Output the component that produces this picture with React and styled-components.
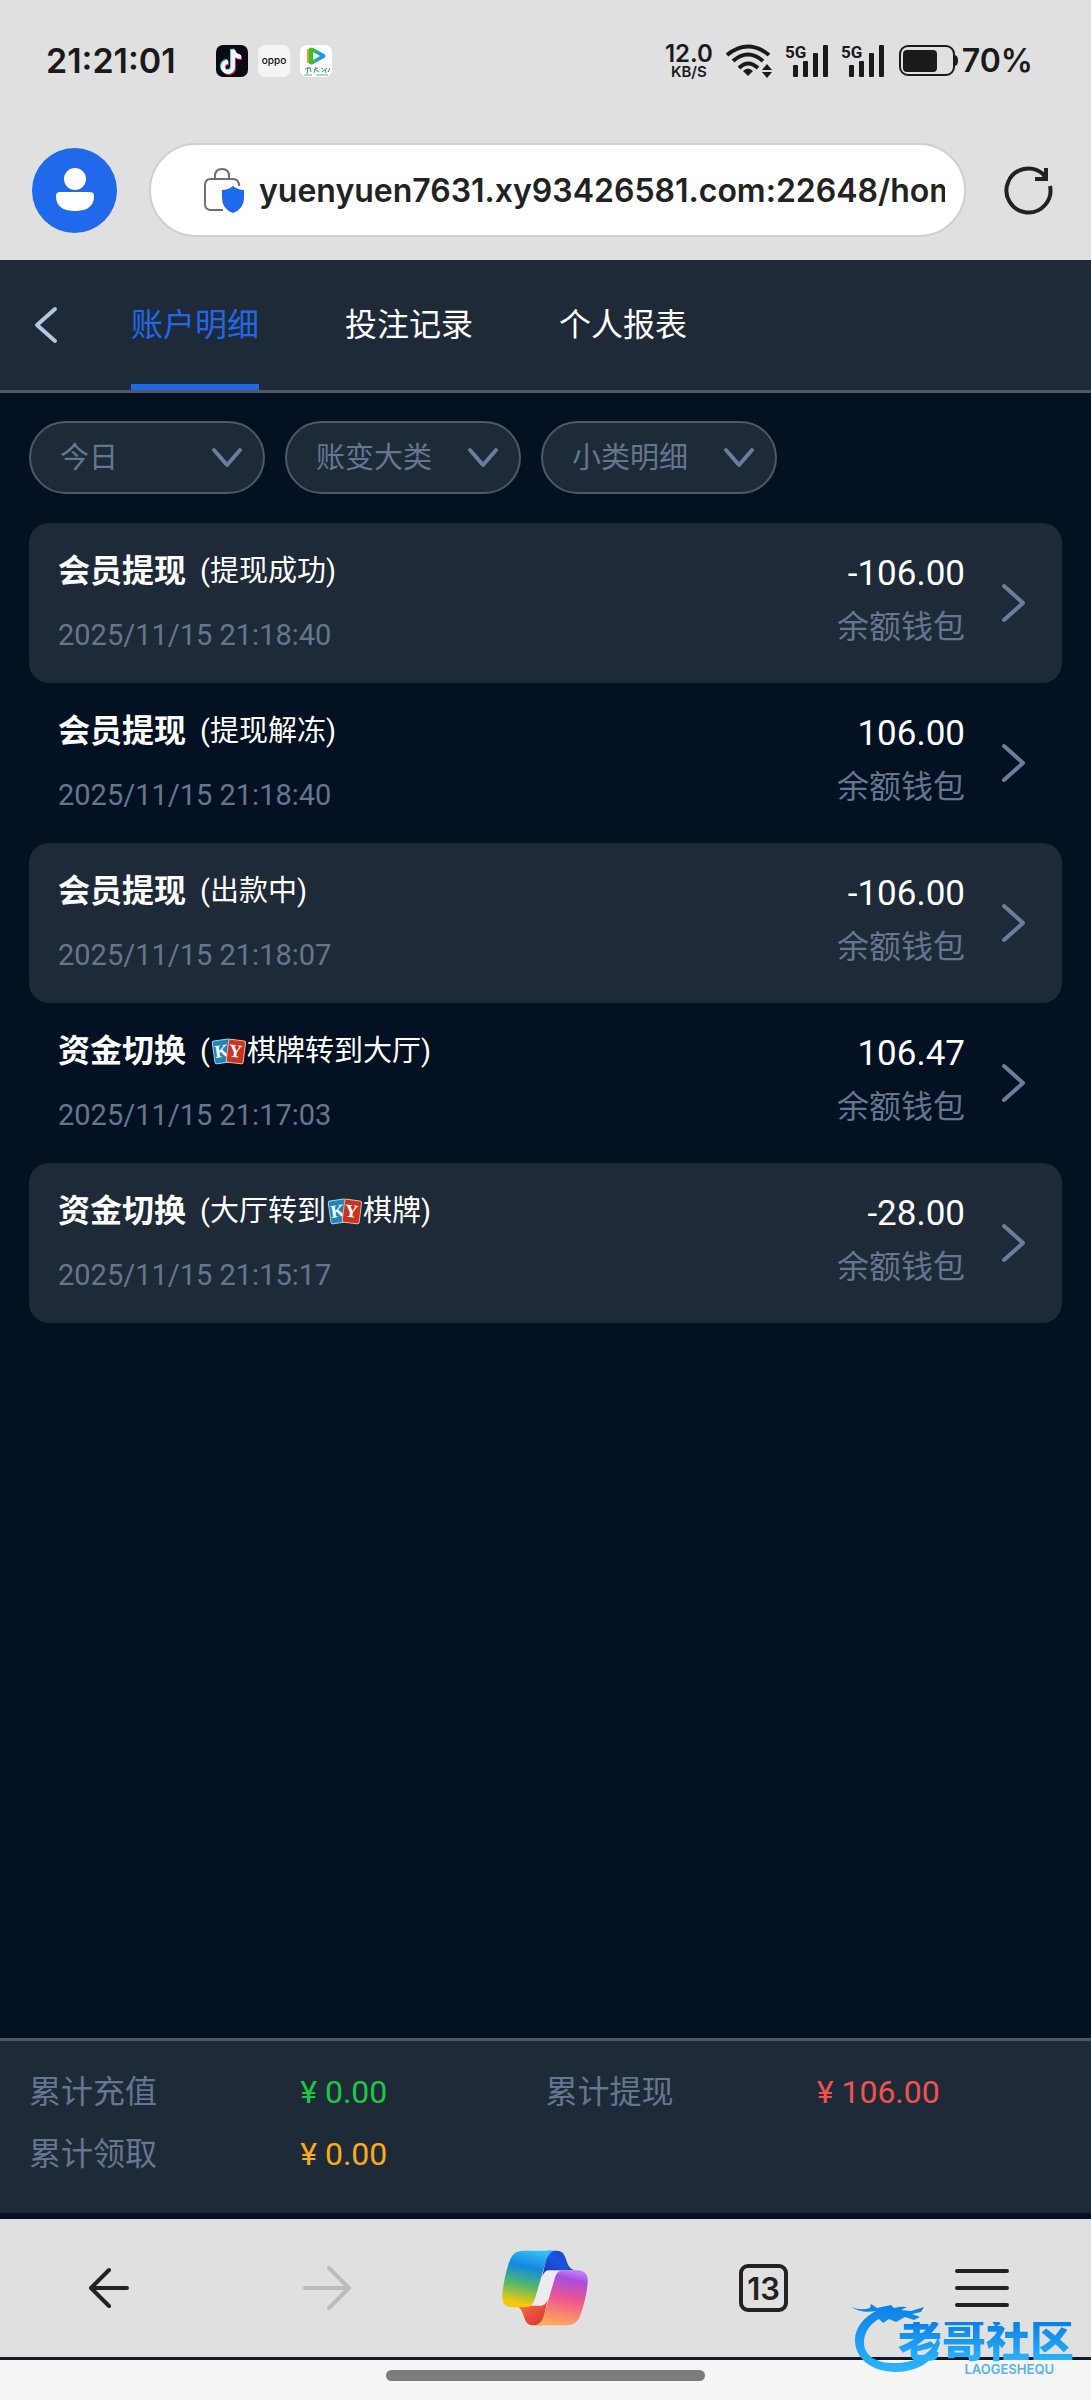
import React, { useState } from "react";
import styled, { createGlobalStyle } from "styled-components";

const GlobalStyle = createGlobalStyle`
  * {
    box-sizing: border-box;
  }
  body {
    margin: 0;
    background-color: #041122;
    font-family: Roboto, "Noto Sans CJK SC", sans-serif;
  }
  button, input, select {
    font-family: inherit;
    border: none;
    padding: 0;
    margin: 0;
    background: none;
    outline: none;
  }
  svg {
    display: block;
    flex-shrink: 0;
    overflow: visible;
  }
`;
const Page = styled.div`
  min-height: 100vh;
  display: flex;
  flex-direction: column;
  position: relative;
`;

/* phone status bar */
const StatusBar = styled.header`
  height: 122px;
  padding: 0 58px 0 46px;
  display: flex;
  align-items: center;
  justify-content: space-between;
  background-color: #e0e0e0;
  color: #1a1a1a;
  font-family: Inter, sans-serif;
`;
const StatusGroup = styled.div`
  display: flex;
  align-items: center;
  gap: ${(props) => props.gap};
`;
const Clock = styled.span`
  width: 160px;
  font-size: 34px;
  line-height: 40px;
  font-weight: 600;
`;
const Speed = styled.div`
  display: flex;
  flex-direction: column;
  align-items: center;
  font-size: 24px;
  line-height: 21px;
  font-weight: 600;
`;
const SpeedUnit = styled.span`
  font-size: 15px;
  line-height: 16px;
`;
const BatteryGroup = styled.div`
  display: flex;
  align-items: center;
  gap: 4px;
  margin-left: 2px;
  font-size: 32px;
  line-height: 40px;
  font-weight: 600;
`;

/* browser address bar */
const AddressBar = styled.div`
  height: 138px;
  padding: 0 38px 2px 32px;
  display: flex;
  align-items: center;
  background-color: #e0e0e0;
`;
const Avatar = styled.button`
  width: 85px;
  height: 85px;
  border-radius: 50%;
  background-color: #2169eb;
  display: flex;
  align-items: center;
  justify-content: center;
`;
const UrlBox = styled.label`
  flex: 1;
  min-width: 0;
  height: 94px;
  margin: 0 38px 0 32px;
  padding: 0 19px 0 52px;
  display: flex;
  align-items: center;
  gap: 14px;
  background-color: #ffffff;
  border: 2px solid #d0d0d0;
  border-radius: 47px;
`;
const UrlInput = styled.input`
  flex: 1;
  min-width: 0;
  height: 48px;
  color: #222222;
  font-family: Inter, sans-serif;
  font-size: 32px;
  font-weight: 600;
`;
const IconButton = styled.button`
  display: flex;
  align-items: center;
  justify-content: center;
`;

/* page tabs */
const Nav = styled.nav`
  height: 133px;
  padding: 0 30px;
  display: flex;
  background-color: #1f2a39;
  border-bottom: 3px solid #505765;
`;
const BackButton = styled(IconButton)`
  width: 32px;
  margin-right: 69px;
`;
const Tab = styled.button`
  margin-right: 86px;
  font-size: 32px;
  color: ${(props) => (props.$active ? "#2168e8" : "#ffffff")};
  border-bottom: 6px solid ${(props) => (props.$active ? "#2168e8" : "transparent")};
`;

const Main = styled.main`
  flex: 1;
  padding: 28px 29px;
`;
const Filters = styled.div`
  display: flex;
  gap: 20px;
  margin-bottom: 29px;
`;
const Filter = styled.label`
  width: 236px;
  height: 73px;
  padding: 0 20px 0 29px;
  display: flex;
  align-items: center;
  background-color: #1f2a39;
  border: 2px solid #505765;
  border-radius: 37px;
`;
const FilterSelect = styled.select`
  appearance: none;
  flex: 1;
  min-width: 0;
  height: 60px;
  color: #66768f;
  font-size: 29px;
`;
const List = styled.ul`
  margin: 0;
  padding: 0;
  list-style: none;
`;
const Record = styled.li`
  border-radius: 20px;
  &:nth-child(odd) {
    background-color: #1f2a39;
  }
`;
const RecordLink = styled.a`
  height: 160px;
  padding: 0 36px 0 29px;
  display: flex;
  align-items: center;
  color: #ffffff;
  text-decoration: none;
`;
const Info = styled.div`
  flex: 1;
`;
const Heading = styled.div`
  display: flex;
  align-items: center;
  gap: 14px;
  height: 48px;
  margin-bottom: 16px;
`;
const Title = styled.strong`
  font-size: 32px;
  line-height: 48px;
`;
const Detail = styled.span`
  display: flex;
  align-items: center;
  font-size: 29px;
  line-height: 48px;
`;
const Time = styled.time`
  display: block;
  font-size: 29px;
  line-height: 48px;
  color: #66768f;
`;
const Sum = styled.div`
  margin-right: 36px;
  padding-bottom: 5px;
  text-align: right;
`;
const Amount = styled.div`
  font-size: 35px;
  line-height: 52px;
`;
const Wallet = styled.div`
  font-size: 32px;
  line-height: 54px;
  color: #66768f;
`;

/* totals */
const Totals = styled.dl`
  margin: 0 0 6px;
  height: 175px;
  padding: 20px 29px 0;
  display: grid;
  grid-template-columns: 1fr 1fr;
  align-content: start;
  background-color: #1f2a39;
  border-top: 3px solid #505765;
`;
const Total = styled.div`
  display: grid;
  grid-template-columns: 21fr 19fr;
  font-size: 32px;
  line-height: 62px;
`;
const TotalLabel = styled.dt`
  color: #66768f;
`;
const TotalValue = styled.dd`
  margin: 0;
  color: ${(props) => props.color};
`;

/* browser toolbar */
const Toolbar = styled.nav`
  height: 138px;
  display: grid;
  grid-template-columns: repeat(5, 1fr);
  background-color: #e0e0e0;
`;
const TabCount = styled.span`
  width: 49px;
  height: 48px;
  display: flex;
  align-items: center;
  justify-content: center;
  border: 4px solid #222222;
  border-radius: 9px;
  color: #222222;
  font-family: Inter, sans-serif;
  font-size: 31px;
  font-weight: 600;
`;
const GestureArea = styled.footer`
  height: 43px;
  display: flex;
  justify-content: center;
  padding-top: 10px;
  background-color: #f5f5f5;
  border-top: 3px solid #101a2a;
`;
const GestureBar = styled.div`
  width: 319px;
  height: 11px;
  border-radius: 6px;
  background-color: #7c7c7c;
`;

/* site stamp over the lower right corner */
const Stamp = styled.div`
  position: absolute;
  right: 17px;
  bottom: 22px;
  width: 222px;
  height: 76px;
  pointer-events: none;
`;
const StampDragon = styled.svg`
  position: absolute;
  left: 0;
  top: 0;
`;
const StampName = styled.div`
  position: absolute;
  right: 0;
  top: 20px;
  font-size: 44px;
  line-height: 40px;
  font-weight: 900;
  color: transparent;
  background: linear-gradient(#0a80e8, #2cb4fb);
  background-clip: text;
`;
const StampLatin = styled.div`
  position: absolute;
  right: 20px;
  top: 60px;
  font-family: Inter, sans-serif;
  font-size: 13px;
  line-height: 14px;
  font-weight: 600;
  color: #58b4f0;
`;

const TikTokIcon = () => (
  <svg width="32" height="32" viewBox="0 0 32 32">
    <rect width="32" height="32" rx="7" fill="#090a12" />
    <g fill="none" strokeWidth="4">
      <path d="M16 4v17a5 5 0 1 1-5-5M16 4c1 5 4 7 8 7" stroke="#28e5e6" />
      <path d="M18 6v17a5 5 0 1 1-5-5M18 6c1 5 4 7 8 7" stroke="#f4245c" />
      <path d="M17 5v17a5 5 0 1 1-5-5M17 5c1 5 4 7 8 7" stroke="#ffffff" />
    </g>
  </svg>
);
const OppoIcon = () => (
  <svg width="32" height="32" viewBox="0 0 32 32">
    <rect width="32" height="32" rx="7" fill="#f5f5f5" />
    <text x="16" y="19" textAnchor="middle" fontFamily="Inter, sans-serif" fontSize="10" fontWeight="500" fill="#111">oppo</text>
  </svg>
);
const VideoIcon = () => (
  <svg width="32" height="32" viewBox="0 0 32 32">
    <rect width="32" height="32" rx="7" fill="#ffffff" />
    <path d="M7 5q0-2 3-1v14q-3 1-3-1z" fill="#ff9417" />
    <path d="M9 4q1-2 4-1l11 6q3 2 0 4l-11 6q-3 1-4-1z" fill="#159cec" />
    <path d="M9 4q1-2 4-1l4 3 1 7-5 6q-3 1-4-1z" fill="#31c52c" />
    <path d="M13 7l7 4-7 4z" fill="#ffffff" />
    <path d="M5 24l5-1M8 22l-1 7M10 22l1 5M14 25l4-2M16 22l-2 6M16 25l3 2M21 23l2 1M22 27l5-4M25 24l1 4M28 27l2-4" stroke="#3c8d96" strokeWidth="1" fill="none" />
    <path d="M4 30h8M16 30h12" stroke="#a8dccb" strokeWidth="2" />
  </svg>
);
const WifiIcon = () => (
  <svg width="46" height="34" viewBox="0 0 46 34" fill="none" stroke="#1a1a1a" strokeWidth="4">
    <path d="M1 11Q22-6 43 11" />
    <path d="M7 17Q22 4 37 17" />
    <path d="M13 24Q22 15 32 24" />
    <path d="M17 27q5-5 10 0l-5 5z" fill="#1a1a1a" stroke="none" />
    <path d="M36 26l5-6 5 6zM36 28h10l-5 6z" fill="#1a1a1a" stroke="none" />
  </svg>
);
const SignalIcon = () => (
  <svg width="43" height="34" viewBox="0 0 43 34" fill="#1a1a1a">
    <text x="0" y="14" fontFamily="Roboto, sans-serif" fontSize="17" fontWeight="700">5G</text>
    <rect x="8" y="21" width="5" height="12" rx="1" />
    <rect x="18" y="17" width="5" height="16" rx="1" />
    <rect x="28" y="9" width="5" height="24" rx="1" />
    <rect x="38" y="1" width="5" height="32" rx="1" />
  </svg>
);
const BatteryIcon = () => (
  <svg width="59" height="32" viewBox="0 0 59 32">
    <rect x="1" y="1" width="54" height="29" rx="8" fill="none" stroke="#1a1a1a" strokeWidth="2" />
    <rect x="4" y="5" width="34" height="22" rx="4" fill="#1a1a1a" />
    <path d="M55 10q4 0 4 5.500t-4 5.500z" fill="#1a1a1a" />
  </svg>
);
const UserIcon = () => (
  <svg width="38" height="44" viewBox="0 0 38 44" fill="#ffffff">
    <circle cx="19" cy="11" r="11" />
    <path d="M4 24h30q4 0 4 4 0 15-19 15T0 28q0-4 4-4z" />
  </svg>
);
const LockIcon = () => (
  <svg width="42" height="46" viewBox="0 0 42 46">
    <path d="M20 43H8q-6 0-6-6V18q0-6 6-6h22q6 0 6 7M12 12V9q0-7 7-7t7 7v3" fill="none" stroke="#6e6e6e" strokeWidth="2" />
    <path d="M30 19q5 4 11 4v8q0 11-11 15-11-4-11-15v-8q6 0 11-4z" fill="#2169eb" />
  </svg>
);
const ReloadIcon = () => (
  <svg width="49" height="50" viewBox="0 0 49 50" fill="none" stroke="#222222" strokeWidth="4">
    <path d="M46 21a22 22 0 1 1-7-12l3 5" />
    <path d="M42 3v11H31" />
  </svg>
);
const Chevron = ({ w, h, d, color = "#6b7d9c" }) => (
  <svg width={w} height={h} viewBox={`0 0 ${w} ${h}`} fill="none" stroke={color} strokeWidth="4" strokeLinecap="round" strokeLinejoin="round">
    <path d={d} />
  </svg>
);
const CardsIcon = () => (
  <svg width="37" height="28" viewBox="-1 0 36 28">
    <g transform="rotate(-8 10 14)">
      <rect x="2" y="3" width="18" height="23" rx="2" fill="#2184b8" stroke="#9cd4ec" />
      <text x="10" y="20" textAnchor="middle" fontFamily="Liberation Serif, serif" fontWeight="700" fontSize="18" fill="#fff">K</text>
    </g>
    <g transform="rotate(7 24 14)">
      <rect x="16" y="3" width="17" height="23" rx="2" fill="#c93320" stroke="#eeb4a4" />
      <text x="24" y="20" textAnchor="middle" fontFamily="Liberation Serif, serif" fontWeight="700" fontSize="18" fill="#fff">Y</text>
    </g>
  </svg>
);
const CopilotIcon = () => (
  <svg width="86" height="76" viewBox="97 91 258 228">
    <defs>
      <linearGradient id="ribbonLeft" x1="0.6" y1="0" x2="0.4" y2="1">
        <stop offset="0" stopColor="#35bdf8" />
        <stop offset="0.3" stopColor="#1488e0" />
        <stop offset="0.62" stopColor="#52b86c" />
        <stop offset="0.95" stopColor="#f3ca0a" />
      </linearGradient>
      <linearGradient id="ribbonRight" x1="0.6" y1="0" x2="0.4" y2="1">
        <stop offset="0" stopColor="#c07cf0" />
        <stop offset="0.14" stopColor="#a84ce4" />
        <stop offset="0.5" stopColor="#f0568c" />
        <stop offset="1" stopColor="#ffac5c" />
      </linearGradient>
      <linearGradient id="foldTop" x1="1" y1="0" x2="0" y2="1">
        <stop offset="0" stopColor="#1c40cc" />
        <stop offset="0.5" stopColor="#1c54dc" />
        <stop offset="1" stopColor="#1430a8" />
      </linearGradient>
      <linearGradient id="foldBottom" x1="0" y1="0" x2="1" y2="1">
        <stop offset="0" stopColor="#f88048" />
        <stop offset="0.6" stopColor="#e84c3c" />
        <stop offset="1" stopColor="#c43830" />
      </linearGradient>
    </defs>
    {/* opening between the two ribbons */}
    <path d="M225 150h45l-35 112h-50z" fill="#ececec" />
    <path d="M235 93h27c16 0 23 11 28 29 7 21 13 28 30 30h-82c-10 0-17 8-21 22z" fill="url(#foldTop)" />
    <path d="M217 317h-27c-16 0-23-11-28-29-7-21-13-28-30-30h82c10 0 17-8 21-22z" fill="url(#foldBottom)" />
    <path d="M160 93h100c-19 0-28 18-34 40l-28 97c-7 24-14 33-34 33h-34c-26 0-34-16-32-38 3-34 12-75 22-102 7-20 20-30 40-30z" fill="url(#ribbonLeft)" />
    <path d="M292 317H192c19 0 28-18 34-40l28-97c7-24 14-28 34-28h34c26 0 34 16 32 38-3 34-12 70-22 97-7 20-20 30-40 30z" fill="url(#ribbonRight)" />
  </svg>
);

const tabs = ["账户明细", "投注记录", "个人报表"];
const filters = ["今日", "账变大类", "小类明细"];
const records = [
  { title: "会员提现", detail: "(提现成功)", time: "2025/11/15 21:18:40", amount: "-106.00" },
  { title: "会员提现", detail: "(提现解冻)", time: "2025/11/15 21:18:40", amount: "106.00" },
  { title: "会员提现", detail: "(出款中)", time: "2025/11/15 21:18:07", amount: "-106.00" },
  { title: "资金切换", detail: <>(<CardsIcon />棋牌转到大厅)</>, time: "2025/11/15 21:17:03", amount: "106.47" },
  { title: "资金切换", detail: <>(大厅转到<CardsIcon />棋牌)</>, time: "2025/11/15 21:15:17", amount: "-28.00" },
];
const totals = [
  { label: "累计充值", value: "¥ 0.00", color: "#1fc741" },
  { label: "累计提现", value: "¥ 106.00", color: "#f05252" },
  { label: "累计领取", value: "¥ 0.00", color: "#fbab18" },
];

const App = () => {
  const [active, setActive] = useState(0);
  return (
    <Page>
      <GlobalStyle />
      <StatusBar>
        <StatusGroup gap="10px">
          <Clock>21:21:01</Clock>
          <TikTokIcon />
          <OppoIcon />
          <VideoIcon />
        </StatusGroup>
        <StatusGroup gap="13px">
          <Speed>
            12.0
            <SpeedUnit>KB/S</SpeedUnit>
          </Speed>
          <WifiIcon />
          <SignalIcon />
          <SignalIcon />
          <BatteryGroup>
            <BatteryIcon />
            70%
          </BatteryGroup>
        </StatusGroup>
      </StatusBar>
      <AddressBar>
        <Avatar aria-label="Profile">
          <UserIcon />
        </Avatar>
        <UrlBox>
          <LockIcon />
          <UrlInput aria-label="Address" readOnly value="yuenyuen7631.xy93426581.com:22648/home" />
        </UrlBox>
        <IconButton aria-label="Reload">
          <ReloadIcon />
        </IconButton>
      </AddressBar>

      <Nav>
        <BackButton aria-label="返回">
          <Chevron w={26} h={38} d="M22 3L4 19L22 35" color="#b4c6e0" />
        </BackButton>
        {tabs.map((tab, index) => (
          <Tab key={tab} $active={index === active} onClick={() => setActive(index)}>
            {tab}
          </Tab>
        ))}
      </Nav>
      <Main>
        <Filters>
          {filters.map((name) => (
            <Filter key={name}>
              <FilterSelect aria-label={name}>
                <option>{name}</option>
              </FilterSelect>
              <Chevron w={32} h={22} d="M3 3L16 18L29 3" />
            </Filter>
          ))}
        </Filters>
        <List>
          {records.map((item, index) => (
            <Record key={index}>
              <RecordLink href="#">
                <Info>
                  <Heading>
                    <Title>{item.title}</Title>
                    <Detail>{item.detail}</Detail>
                  </Heading>
                  <Time>{item.time}</Time>
                </Info>
                <Sum>
                  <Amount>{item.amount}</Amount>
                  <Wallet>余额钱包</Wallet>
                </Sum>
                <Chevron w={25} h={40} d="M3 3L22 20L3 37" />
              </RecordLink>
            </Record>
          ))}
        </List>
      </Main>
      <Totals>
        {totals.map((item) => (
          <Total key={item.label}>
            <TotalLabel>{item.label}</TotalLabel>
            <TotalValue color={item.color}>{item.value}</TotalValue>
          </Total>
        ))}
      </Totals>

      <Toolbar>
        <IconButton aria-label="Back">
          <svg width="42" height="42" viewBox="0 0 42 42" fill="none" stroke="#222222" strokeWidth="4" strokeLinecap="round" strokeLinejoin="round">
            <path d="M39 21H3M21 3L3 21l18 18" />
          </svg>
        </IconButton>
        <IconButton aria-label="Forward" disabled>
          <svg width="49" height="46" viewBox="0 0 49 46" fill="none" stroke="#bcbcbc" strokeWidth="4" strokeLinecap="round" strokeLinejoin="round">
            <path d="M2 23h44M26 3l20 20-20 20" />
          </svg>
        </IconButton>
        <IconButton aria-label="Copilot">
          <CopilotIcon />
        </IconButton>
        <IconButton aria-label="Tabs">
          <TabCount>13</TabCount>
        </IconButton>
        <IconButton aria-label="Menu">
          <svg width="54" height="40" viewBox="0 0 54 40" stroke="#222222" strokeWidth="4" strokeLinecap="round">
            <path d="M2 3h50M2 20h50M2 37h50" />
          </svg>
        </IconButton>
      </Toolbar>
      <GestureArea>
        <GestureBar />
      </GestureArea>

      <Stamp>
        <StampDragon width="100" height="72" viewBox="0 0 100 72">
          <defs>
            <linearGradient id="dragon" x1="0" y1="0" x2="0" y2="1">
              <stop offset="0" stopColor="#0a80e8" />
              <stop offset="1" stopColor="#2cb4fb" />
            </linearGradient>
          </defs>
          <path
            d="M0 5q8 4 18 1l1-4 6 4 14-3 3 3q8-2 13-1l-6 3 10 1 13-4-3 5-9 2 8 3-6 3-9-3-9 5-7-3-6 4-4-4C19 21 12 30 12 40c0 16 16 22 34 21 18-1 34-9 40-26l2 6C84 58 66 70 44 70 19 70 3 56 3 38 3 26 11 16 24 9 14 11 5 9 0 5z"
            fill="url(#dragon)"
          />
        </StampDragon>
        <StampName>老哥社区</StampName>
        <StampLatin>LAOGESHEQU</StampLatin>
      </Stamp>
    </Page>
  );
};

export default App;
